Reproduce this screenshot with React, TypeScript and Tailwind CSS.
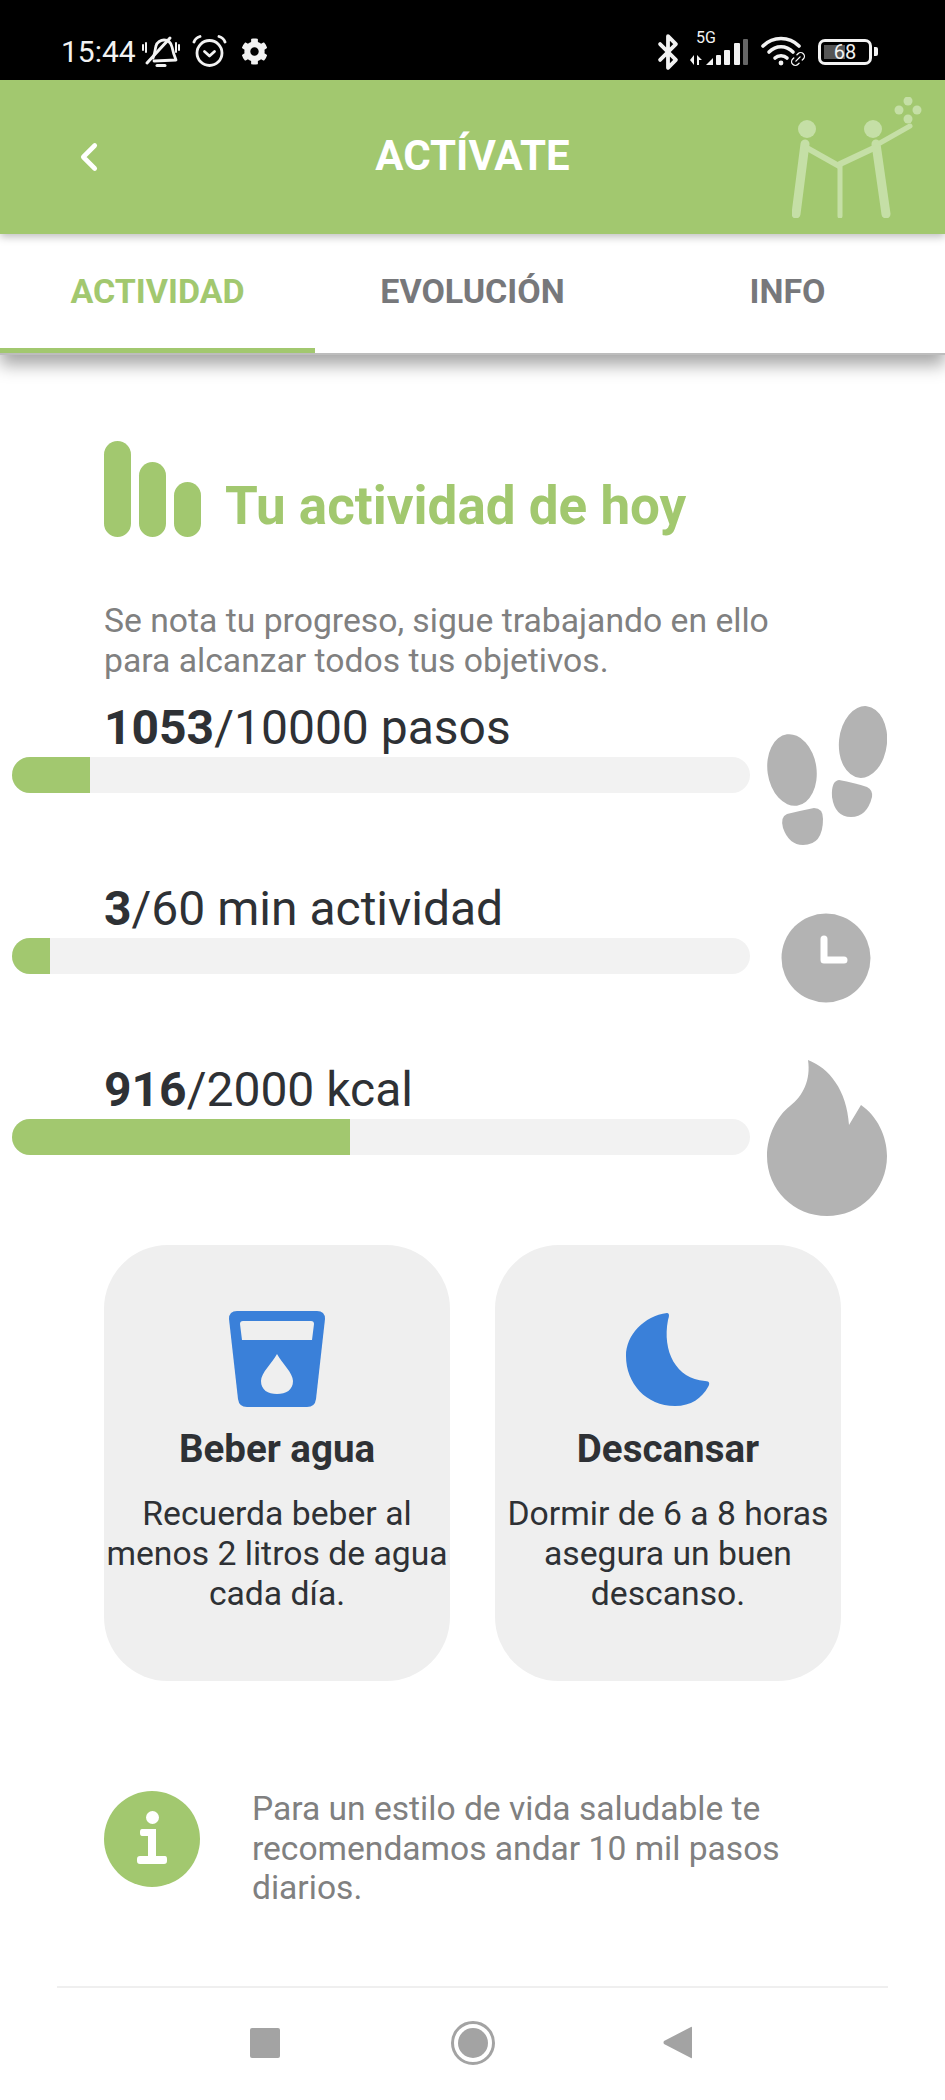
import React from 'react';
import { Bluetooth, ChevronLeft, Link2 } from 'lucide-react';
import { FaCog } from 'react-icons/fa';

const MuteIcon = () => (
  <svg width="38" height="34" viewBox="0 0 38 34" fill="none" stroke="#f2f2f2" strokeWidth="2.8" strokeLinecap="round" strokeLinejoin="round">
    <path d="M11 23 C13 19 13 14 14 11 C15 7 19 5 22 5 C26 5 29 8 30 12 C31 17 32 20 34 25 L12 26" />
    <path d="M15 30.5 H23" strokeWidth="3" />
    <path d="M5 28 L28 3" strokeWidth="3" />
    <path d="M1 10 V15 M4 8 V17 M34 8 V17 M37 10 V15" strokeWidth="2" />
  </svg>
);

const AlarmIcon = () => (
  <svg width="35" height="33" viewBox="0 0 35 33" fill="none" stroke="#f2f2f2" strokeWidth="2.8" strokeLinecap="round" strokeLinejoin="round">
    <circle cx="17.5" cy="18" r="12.5" />
    <path d="M12.5 16.5 L17.5 21 L22.5 16.5" />
    <path d="M2 7 C3 4 5 2.5 8 1.5 M33 7 C32 4 30 2.5 27 1.5" />
  </svg>
);

const SignalIcon = () => (
  <svg width="60" height="30" viewBox="0 0 60 30" fill="#f2f2f2">
    <path d="M4 18 V28 L0 23 Z M7 18 V28 H9 V23 H12 Z" />
    <path d="M16 28 L23 21 V28 Z" />
    <rect x="26" y="18" width="5" height="10" rx="1" />
    <rect x="34" y="13" width="6" height="15" rx="1" />
    <rect x="44" y="6" width="6" height="22" rx="1" />
    <rect x="53" y="2" width="5" height="26" rx="1" fill="#666666" />
  </svg>
);

const WifiIcon = () => (
  <svg width="40" height="30" viewBox="0 0 40 30" fill="none" stroke="#f2f2f2" strokeWidth="3.6" strokeLinecap="round">
    <path d="M2 10 C12 0 28 0 38 10" />
    <path d="M8 16 C15 9 25 9 32 16" />
    <path d="M14 22 C17 19 23 19 26 22" />
    <circle cx="20" cy="27" r="2.4" fill="#f2f2f2" stroke="none" />
  </svg>
);

const PeopleLogo = () => (
  <svg width="130" height="121" viewBox="0 0 130 121" fill="#c5dfa6" stroke="#c5dfa6" strokeLinecap="round">
    <circle cx="15" cy="32" r="9" stroke="none" />
    <circle cx="81" cy="32" r="9" stroke="none" />
    <circle cx="116" cy="4" r="4.5" stroke="none" />
    <circle cx="107" cy="13" r="4.5" stroke="none" />
    <circle cx="125" cy="13" r="4.5" stroke="none" />
    <circle cx="116" cy="22" r="4.5" stroke="none" />
    <path d="M13 47 L4 117" strokeWidth="9" fill="none" />
    <path d="M15 51 L47 69" strokeWidth="6" fill="none" />
    <path d="M84 47 L94 117" strokeWidth="9" fill="none" />
    <path d="M82 51 L48 67" strokeWidth="6" fill="none" />
    <path d="M88 46 L118 29" strokeWidth="5" fill="none" />
    <path d="M48 69 V119" strokeWidth="5" fill="none" />
  </svg>
);

const FeetIcon = () => (
  <svg width="120" height="139" viewBox="0 0 120 139" fill="#b3b3b3" className="shrink-0 mt-[6px]">
    <ellipse cx="25" cy="64" rx="24.5" ry="36" transform="rotate(-8 25 64)" />
    <ellipse cx="96" cy="36" rx="24" ry="36" transform="rotate(6 96 36)" />
    <path d="M20 108 Q32 105 47 102 Q56 102 56 113 Q56 139 36 139 Q22 139 16 122 Q13 111 20 108 Z" />
    <path d="M72 74 Q88 77 100 81 Q106 84 105 91 Q100 111 84 111 Q68 111 65 91 Q64 75 72 74 Z" />
  </svg>
);

const ClockIcon = () => (
  <svg width="90" height="90" viewBox="0 0 90 90" className="shrink-0 mt-[32px] ml-[14px]">
    <circle cx="45" cy="45" r="44.5" fill="#b3b3b3" />
    <path d="M43 26 V47 H63" fill="none" stroke="#ffffff" strokeWidth="7" strokeLinecap="round" strokeLinejoin="round" />
  </svg>
);

const FlameIcon = () => (
  <svg width="120" height="156" viewBox="0 0 120 156" fill="#b3b3b3" className="shrink-0 -mt-[2px]">
    <path d="M41 0 C62 8 80 30 82 65 L94 45 C110 56 120 76 120 96 C120 130 93 156 60 156 C27 156 0 130 0 96 C0 76 10 56 23 46 C36 36 44 20 41 0 Z" />
  </svg>
);

const CupIcon = () => (
  <svg width="96" height="96" viewBox="0 0 96 96">
    <path d="M8 0 H88 Q96 0 96 8 L87 88 Q86 96 78 96 H18 Q10 96 9 88 L0 8 Q0 0 8 0 Z" fill="#3a80d9" />
    <path d="M14 10 H82 Q85 10 85 13 L83 29 H13 L11 13 Q11 10 14 10 Z" fill="#efefef" />
    <path d="M48 43 C53 52 64 62 64 70 C64 79 57 83 48 83 C39 83 32 79 32 70 C32 62 43 52 48 43 Z" fill="#efefef" />
  </svg>
);

const MoonIcon = () => (
  <svg width="84" height="93" viewBox="0 0 84 93">
    <path d="M41 0 C44 0 43 4 42 7 C36 38 50 66 79 68 C84 68 84 71 82 74 C76 85 65 93 49 93 C20 93 0 70 0 43 C0 22 18 3 41 0 Z" fill="#3a80d9" />
  </svg>
);

const rows = [
  { done: '1053', rest: '/10000 pasos', fill: 'w-[78px]', icon: <FeetIcon /> },
  { done: '3', rest: '/60 min actividad', fill: 'w-[38px]', icon: <ClockIcon /> },
  { done: '916', rest: '/2000 kcal', fill: 'w-[338px]', icon: <FlameIcon /> },
];

const cards = [
  { title: 'Beber agua', text: ['Recuerda beber al', 'menos 2 litros de agua', 'cada día.'], icon: <CupIcon /> },
  { title: 'Descansar', text: ['Dormir de 6 a 8 horas', 'asegura un buen', 'descanso.'], icon: <MoonIcon /> },
];

export default function App() {
  return (
    <div className="w-[945px] h-[2100px] overflow-hidden bg-white flex flex-col font-[Roboto,sans-serif]">
      {/* Status bar */}
      <div className="h-[80px] shrink-0 bg-black flex items-center justify-between pl-[61px] pr-[67px] pt-[25px] pb-[2px]">
        <div className="flex items-center">
          <span className="text-[30px] leading-none text-[#f2f2f2] w-[81px]">15:44</span>
          <MuteIcon />
          <div className="ml-[12px]"><AlarmIcon /></div>
          <FaCog className="ml-[14px] text-[#f2f2f2]" size={27} />
        </div>
        <div className="flex items-center">
          <Bluetooth size={38} color="#f2f2f2" strokeWidth={2.4} />
          <div className="relative ml-[3px]">
            <span className="absolute left-[6px] -top-[7px] text-[16px] leading-none text-[#f2f2f2]">5G</span>
            <SignalIcon />
          </div>
          <div className="relative ml-[11px] w-[46px] h-[32px]">
            <WifiIcon />
            <Link2 className="absolute right-0 bottom-0 -rotate-45" size={18} color="#f2f2f2" strokeWidth={1.8} />
          </div>
          <div className="ml-[11px] w-[54px] h-[26px] rounded-[7px] border-[3px] border-[#f2f2f2] flex items-center justify-center relative">
            <span className="absolute left-[3px] top-[3px] w-[21px] h-[14px] bg-[#555555]" />
            <span className="relative text-[20px] leading-none text-[#f2f2f2]">68</span>
          </div>
          <div className="ml-[2px] w-[4px] h-[9px] rounded-r-[2px] bg-[#f2f2f2]" />
        </div>
      </div>

      {/* Header */}
      <div className="relative z-20 h-[154px] shrink-0 bg-[#a2c86f] shadow-[0_3px_8px_rgba(0,0,0,0.25)] flex items-center justify-between pl-[70px] pr-[23px]">
        <ChevronLeft size={46} color="#ffffff" strokeWidth={2.4} className="-ml-[4px]" />
        <h1 className="absolute inset-x-0 top-[52px] text-center text-[42px] leading-[48px] font-bold text-white">ACTÍVATE</h1>
        <PeopleLogo />
      </div>

      {/* Tabs */}
      <div className="relative z-10 h-[121px] shrink-0 bg-white grid grid-cols-3 shadow-[0_10px_16px_rgba(0,0,0,0.35)] border-b-2 border-[#bdbdbd]">
        <div className="h-[119px] flex justify-center pt-[37px] border-b-[5px] border-[#a2c86f] text-[#a2c86f] text-[34px] leading-[40px] font-bold">ACTIVIDAD</div>
        <div className="flex justify-center pt-[37px] text-[#77787b] text-[34px] leading-[40px] font-bold">EVOLUCIÓN</div>
        <div className="flex justify-center pt-[37px] text-[#77787b] text-[34px] leading-[40px] font-bold">INFO</div>
      </div>

      {/* Today */}
      <div className="flex items-end pl-[104px] mt-[86px]">
        <div className="flex items-end gap-[8px]">
          <div className="w-[27px] h-[96px] rounded-full bg-[#a2c86f]" />
          <div className="w-[27px] h-[75px] rounded-full bg-[#a2c86f]" />
          <div className="w-[27px] h-[55px] rounded-full bg-[#a2c86f]" />
        </div>
        <h2 className="ml-[24px] text-[53px] leading-[56px] font-bold text-[#a2c86f] mb-[3px]">Tu actividad de hoy</h2>
      </div>

      <p className="pl-[104px] mt-[64px] text-[33.7px] leading-[39.5px] text-[#808080]">
        Se nota tu progreso, sigue trabajando en ello
        <br />
        para alcanzar todos tus objetivos.
      </p>

      {/* Progress rows */}
      <div className="flex flex-col gap-[125px] mt-[20px] pl-[12px]">
        {rows.map((row) => (
          <div key={row.done} className="flex items-start h-[56px]">
            <div className="w-[738px] shrink-0">
              <div className="pl-[92px] text-[48px] leading-[56px] text-[#2e3135]">
                <span className="font-bold">{row.done}</span>
                {row.rest}
              </div>
              <div className="h-[36px] rounded-full bg-[#f2f2f2] mt-[1px]">
                <div className={`h-full rounded-l-full bg-[#a2c86f] ${row.fill}`} />
              </div>
            </div>
            <div className="ml-[17px]">{row.icon}</div>
          </div>
        ))}
      </div>

      {/* Cards */}
      <div className="flex gap-[45px] pl-[104px] mt-[127px]">
        {cards.map((card) => (
          <div key={card.title} className="w-[346px] h-[436px] rounded-[64px] bg-[#efefef] flex flex-col items-center pt-[66px]">
            <div className="h-[96px] flex items-center">{card.icon}</div>
            <h3 className="mt-[20px] text-[38.5px] leading-[44px] font-bold text-[#2e3135]">{card.title}</h3>
            <p className="mt-[23px] text-[33.7px] leading-[40px] text-[#2e3135] text-center whitespace-nowrap">
              {card.text.map((line) => (
                <span key={line} className="block">{line}</span>
              ))}
            </p>
          </div>
        ))}
      </div>

      {/* Tip */}
      <div className="flex pl-[104px] mt-[110px]">
        <div className="w-[96px] h-[96px] shrink-0 rounded-full bg-[#a2c86f] flex flex-col items-center pt-[20px]">
          <div className="w-[13px] h-[13px] rounded-full bg-white" />
          <svg width="30" height="36" viewBox="0 0 30 36" fill="#ffffff" className="mt-[4px]">
            <path d="M5 1 H19 V28 H28 Q30 28 30 31 V33 Q30 36 27 36 H3 Q0 36 0 33 V31 Q0 28 3 28 H11 V8 H5 Q3 8 3 5 V4 Q3 1 5 1 Z" />
          </svg>
        </div>
        <p className="ml-[52px] -mt-[2px] text-[33.6px] leading-[39.5px] text-[#808080]">
          Para un estilo de vida saludable te
          <br />
          recomendamos andar 10 mil pasos
          <br />
          diarios.
        </p>
      </div>

      {/* Nav bar */}
      <div className="mx-[57px] mt-[78px] h-[2px] bg-[#efefef]" />
      <div className="relative flex items-center pl-[250px] mt-[33px] h-[44px]">
        <div className="w-[30px] h-[30px] rounded-[2px] bg-[#a3a3a3]" />
        <div className="ml-[171px] w-[44px] h-[44px] rounded-full border-[3px] border-[#a3a3a3] flex items-center justify-center">
          <div className="w-[30px] h-[30px] rounded-full bg-[#a3a3a3]" />
        </div>
        <svg width="29" height="33" viewBox="0 0 29 33" fill="#a3a3a3" className="ml-[168px]">
          <path d="M28 1 Q29 0 29 2 V31 Q29 33 28 32 L1 18 Q0 16.5 1 15 Z" />
        </svg>
      </div>
    </div>
  );
}
